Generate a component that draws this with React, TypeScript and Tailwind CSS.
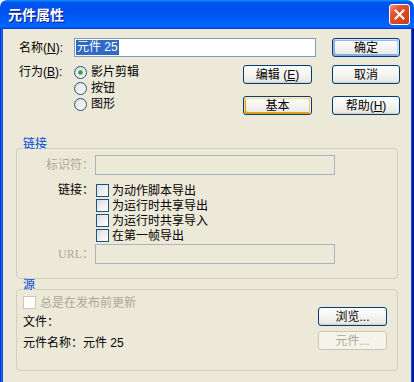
import React from 'react';

type BtnVariant = 'normal' | 'default' | 'hover' | 'disabled';

const btnStyles: Record<BtnVariant, string> = {
  normal: 'border-[#003C74] bg-[linear-gradient(180deg,#fff,#ecebe6_86%,#d6d0c5)] text-black',
  default:
    'border-[#003C74] bg-[linear-gradient(180deg,#fff,#ecebe6_86%,#d6d0c5)] text-black shadow-[inset_-1px_1px_#cee7ff,inset_1px_2px_#98b8ea,inset_-2px_2px_#bcd4f6,inset_1px_-1px_#89ade4,inset_2px_-2px_#89ade4]',
  hover:
    'border-[#003C74] bg-[linear-gradient(180deg,#fff,#ecebe6_86%,#d6d0c5)] text-black shadow-[inset_-1px_1px_#fff0cf,inset_1px_2px_#fdd889,inset_-2px_2px_#fbc761,inset_2px_-2px_#e5a01a]',
  disabled: 'border-[#C9C7BA] bg-[#F5F4EA] text-[#ACA899]',
};

const Btn = ({
  children,
  variant = 'normal',
  className = '',
}: {
  children: React.ReactNode;
  variant?: BtnVariant;
  className?: string;
}) => (
  <div
    className={`flex h-[19px] items-center justify-center rounded-[3px] border leading-none ${btnStyles[variant]} ${className}`}
  >
    {children}
  </div>
);

const Radio = ({ checked }: { checked?: boolean }) => (
  <svg width="13" height="13" viewBox="0 0 13 13" className="shrink-0">
    <defs>
      <linearGradient id="radioFill" x1="0" y1="0" x2="1" y2="1">
        <stop offset="0" stopColor="#dcdcd7" />
        <stop offset="1" stopColor="#ffffff" />
      </linearGradient>
    </defs>
    <circle cx="6.5" cy="6.5" r="6" fill="url(#radioFill)" stroke="#1d5281" />
    {checked && <circle cx="6.5" cy="6.5" r="2.3" fill="#3d9a3d" />}
  </svg>
);

const Check = ({ disabled }: { disabled?: boolean }) =>
  disabled ? (
    <span className="h-[13px] w-[13px] shrink-0 border border-[#CAC8BB] bg-white" />
  ) : (
    <span className="h-[13px] w-[13px] shrink-0 border border-[#1d5281] bg-[linear-gradient(135deg,#dcdcd7,#fff)]" />
  );

const linkOptions = ['为动作脚本导出', '为运行时共享导出', '为运行时共享导入', '在第一帧导出'];

export default function App() {
  return (
    <div className="h-[382px] w-[414px] overflow-hidden bg-white font-['Liberation_Sans','Noto_Sans_CJK_SC',sans-serif] text-[12px] text-black">
      {/* title bar */}
      <div className="flex h-[29px] items-center justify-between rounded-t-[7px] bg-[linear-gradient(180deg,#0997ff,#0053ee_8%,#0050ee_40%,#06f_88%,#06f_93%,#005bff_95%,#003dd7_96%,#003dd7)] pl-[8px] pr-[4px]">
        <span className="text-[14px] font-bold leading-none text-white [text-shadow:1px_1px_#0f1089]">元件属性</span>
        <div className="flex h-[21px] w-[21px] items-center justify-center rounded-[3px] border border-white bg-[linear-gradient(135deg,#f09a7c,#e2552e_30%,#d4441d_75%,#bf3616)]">
          <svg width="11" height="11" viewBox="0 0 11 11">
            <path d="M1.5 1.5 L9.5 9.5 M9.5 1.5 L1.5 9.5" stroke="white" strokeWidth="2" strokeLinecap="square" />
          </svg>
        </div>
      </div>

      {/* frame + body */}
      <div className="h-[353px] bg-[#0855DD] px-[3px] shadow-[inset_1px_0_#0831d9,inset_2px_0_#166aee,inset_-1px_0_#00138c,inset_-2px_0_#001ea0]">
        <div className="h-full bg-[#ECE9D8]">
          {/* top area */}
          <div className="flex pl-[16px] pr-[11px] pt-[9px]">
            <div className="flex w-[297px] flex-col">
              <div className="flex h-[19px] items-center">
                <span className="w-[55px]">
                  名称(<u>N</u>):
                </span>
                <div className="flex h-[19px] flex-1 items-center border border-[#7F9DB9] bg-white pl-[1px]">
                  <span className="bg-[#316AC5] px-[1px] leading-[15px] text-white">元件 25</span>
                </div>
              </div>
              <div className="mt-[7px] flex">
                <span className="flex h-[16px] w-[55px] items-center">
                  行为(<u>B</u>):
                </span>
                <div className="flex flex-1 flex-col">
                  <div className="flex h-[16px] items-center gap-[4px]">
                    <Radio checked />
                    影片剪辑
                  </div>
                  <div className="flex h-[16px] items-center gap-[4px]">
                    <Radio />
                    按钮
                  </div>
                  <div className="flex h-[16px] items-center gap-[4px]">
                    <Radio />
                    图形
                  </div>
                </div>
                <div className="mr-[4px] flex w-[69px] flex-col">
                  <Btn className="mt-[1px]">
                    编辑 (<u>E</u>)
                  </Btn>
                  <Btn variant="hover" className="mt-[12px]">
                    基本
                  </Btn>
                </div>
              </div>
            </div>
            <div className="ml-[16px] flex w-[68px] flex-col">
              <Btn variant="default">确定</Btn>
              <Btn className="mt-[8px]">取消</Btn>
              <Btn className="mt-[12px]">
                帮助(<u>H</u>)
              </Btn>
            </div>
          </div>

          {/* linkage group */}
          <fieldset className="mx-[13px] mt-[23px] rounded-[4px] border border-[#D0D0BF] pb-[14px]">
            <legend className="ml-[6px] pb-[8px] leading-[12px] text-[#0046D5]">链接</legend>
            <div className="-mt-[3px] flex h-[20px] items-center">
              <span className="w-[78px] pr-[1px] text-right text-[#ACA899]">标识符：</span>
              <div className="h-[20px] w-[240px] border border-[#A9B4BE] bg-[#ECE9D8]" />
            </div>
            <div className="mt-[8px] flex">
              <span className="w-[78px] pr-[1px] text-right leading-[15px]">链接：</span>
              <div className="ml-[1px] flex flex-col">
                {linkOptions.map((t) => (
                  <div key={t} className="flex h-[15px] items-center gap-[3px]">
                    <Check />
                    {t}
                  </div>
                ))}
              </div>
            </div>
            <div className="mt-[1px] flex h-[20px] items-center">
              <span className="w-[78px] pr-[1px] text-right text-[#ACA899]">
                <span className="font-['Liberation_Serif',serif]">URL</span>：
              </span>
              <div className="h-[20px] w-[240px] border border-[#A9B4BE] bg-[#ECE9D8]" />
            </div>
          </fieldset>

          {/* source group */}
          <fieldset className="mx-[13px] rounded-[4px] border border-[#D0D0BF] pb-[20px]">
            <legend className="ml-[6px] pb-[8px] leading-[12px] text-[#0046D5]">源</legend>
            <div className="-mt-[3px] flex pl-[6px] pr-[10px]">
              <div className="flex flex-1 flex-col">
                <div className="flex h-[13px] items-center gap-[4px] text-[#ACA899]">
                  <Check disabled />
                  总是在发布前更新
                </div>
                <div className="mt-[6px] h-[14px] leading-[14px]">文件：</div>
                <div className="mt-[7px] h-[14px] leading-[14px]">元件名称：元件 25</div>
              </div>
              <div className="mt-[11px] flex w-[69px] flex-col">
                <Btn>浏览...</Btn>
                <Btn variant="disabled" className="mt-[5px]">
                  元件...
                </Btn>
              </div>
            </div>
          </fieldset>
        </div>
      </div>
    </div>
  );
}
